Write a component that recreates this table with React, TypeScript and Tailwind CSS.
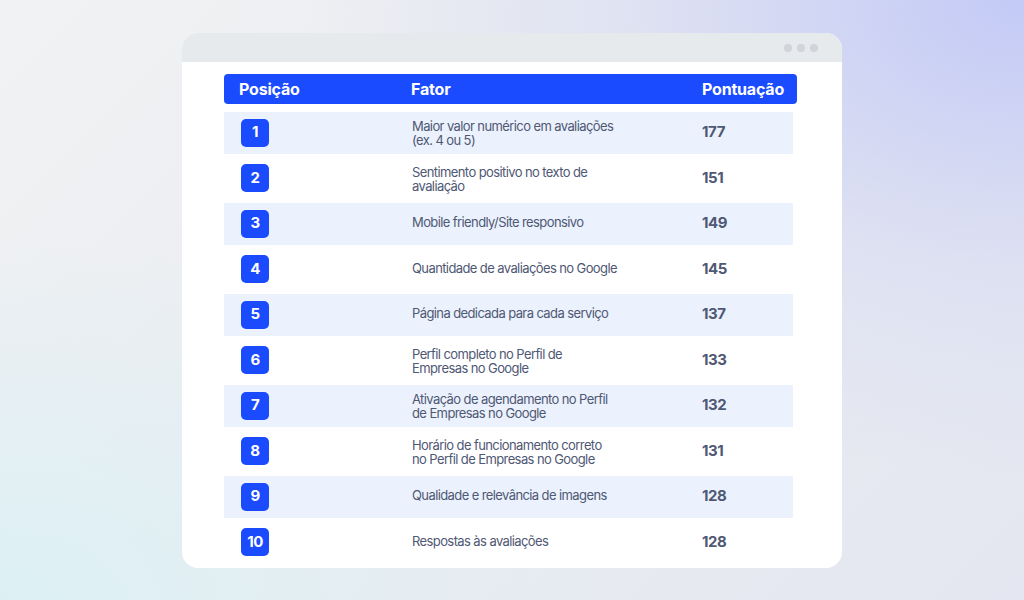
import React from "react";

const rows = [
  { n: 1, f: ["Maior valor numérico em avaliações", "(ex. 4 ou 5)"], s: 177 },
  { n: 2, f: ["Sentimento positivo no texto de", "avaliação"], s: 151 },
  { n: 3, f: ["Mobile friendly/Site responsivo"], s: 149 },
  { n: 4, f: ["Quantidade de avaliações no Google"], s: 145 },
  { n: 5, f: ["Página dedicada para cada serviço"], s: 137 },
  { n: 6, f: ["Perfil completo no Perfil de", "Empresas no Google"], s: 133 },
  { n: 7, f: ["Ativação de agendamento no Perfil", "de Empresas no Google"], s: 132 },
  { n: 8, f: ["Horário de funcionamento correto", "no Perfil de Empresas no Google"], s: 131 },
  { n: 9, f: ["Qualidade e relevância de imagens"], s: 128 },
  { n: 10, f: ["Respostas às avaliações"], s: 128 },
];

export default function App() {
  return (
    <div
      className="w-[1024px] h-[600px] overflow-hidden flex items-start justify-center pt-[33px] bg-[image:radial-gradient(ellipse_70%_80%_at_100%_0%,#c3caf6_0%,rgba(215,219,242,0.6)_55%,rgba(229,232,241,0)_100%),radial-gradient(ellipse_60%_60%_at_0%_100%,#dcf0f4_0%,rgba(224,240,244,0)_100%),linear-gradient(135deg,#f1f2f3_0%,#e9ebf1_60%,#e4e7f1_100%)]"
      style={{ fontFamily: "Inter, 'Noto Sans', sans-serif" }}
    >
      <div className="w-[660px] h-[535px] bg-white rounded-[16px] overflow-hidden flex flex-col">
        <div className="h-[29px] bg-[#e7eaed] flex items-center justify-end pr-[24px] gap-[5px] shrink-0">
          <span className="w-[8px] h-[8px] rounded-full bg-[#d1d4d8]" />
          <span className="w-[8px] h-[8px] rounded-full bg-[#d1d4d8]" />
          <span className="w-[8px] h-[8px] rounded-full bg-[#d1d4d8]" />
        </div>
        <div className="pl-[42px] pr-[45px] pt-[12px] flex flex-col">
          <div className="h-[30px] bg-[#1a4bff] rounded-[4px] flex items-center text-white font-bold text-[16px] tracking-[-0.2px]">
            <div className="w-[187px] pl-[15px]">Posição</div>
            <div className="w-[291px]">Fator</div>
            <div>Pontuação</div>
          </div>
          <div className="mt-[8px] w-[569px] flex flex-col">
            {rows.map((r, i) => (
              <div
                key={r.n}
                className={
                  "flex items-center " +
                  (i % 2 === 0 ? "h-[42px] bg-[#ebf2fd]" : "h-[49px] bg-white")
                }
              >
                <div className="w-[188px] pl-[17px]">
                  <div className="w-[28px] h-[28px] rounded-[5px] bg-[#1a4bff] text-white font-bold text-[15px] flex items-center justify-center tracking-[-0.5px] -mt-[1px]">
                    {r.n}
                  </div>
                </div>
                <div
                  className={
                    "w-[290px] text-[13px] leading-[14px] text-[#4f5874] tracking-[-0.6px] " +
                    (r.f.length === 1 ? "mb-[4px]" : "")
                  }
                >
                  {r.f.map((l, j) => (
                    <div key={j}>{l}</div>
                  ))}
                </div>
                <div className="text-[15px] font-bold text-[#4f5874] tracking-[-0.4px] -mt-[1px]">
                  {r.s}
                </div>
              </div>
            ))}
          </div>
        </div>
      </div>
    </div>
  );
}
